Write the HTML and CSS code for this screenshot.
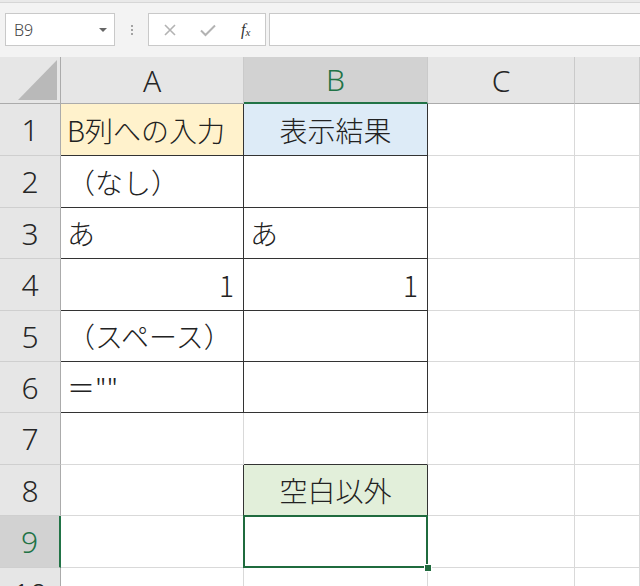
FILE: index.html
```html
<!DOCTYPE html>
<html lang="ja">
<head>
<meta charset="utf-8">
<title>Excel</title>
<link rel="stylesheet" href="styles.css">
</head>
<body>
<div class="app">
  <div class="toolbar">
    <div class="namebox"><span class="ref">B9</span><span class="caret"></span></div>
    <div class="dots"><i></i><i></i><i></i></div>
    <div class="fbtns">
      <svg class="ico" width="14" height="14" viewBox="0 0 14 14"><path d="M2 2 L12 12 M12 2 L2 12" stroke="#b3b3b3" stroke-width="1.6" fill="none"/></svg>
      <svg class="ico" width="18" height="14" viewBox="0 0 18 14"><path d="M2 7.5 L6.5 12 L16 2.5" stroke="#b3b3b3" stroke-width="2" fill="none"/></svg>
      <span class="fx">f<sub>x</sub></span>
    </div>
    <div class="finput"></div>
  </div>
  <div class="sheet">
    <div class="hd corner"><svg width="60" height="46" viewBox="0 0 60 46"><polygon points="57,3 57,43 18,43" fill="#b9b9b9"/></svg></div>
    <div class="hd ch">A</div>
    <div class="hd ch sel">B</div>
    <div class="hd ch">C</div>
    <div class="hd ch"></div>

    <div class="hd rh">1</div>
    <div class="c y dr db l">B列への入力</div>
    <div class="c bl dr db ctr">表示結果</div>
    <div class="c"></div>
    <div class="c"></div>

    <div class="hd rh">2</div>
    <div class="c dr db l">（なし）</div>
    <div class="c dr db"></div>
    <div class="c"></div>
    <div class="c"></div>

    <div class="hd rh">3</div>
    <div class="c dr db l">あ</div>
    <div class="c dr db l">あ</div>
    <div class="c"></div>
    <div class="c"></div>

    <div class="hd rh">4</div>
    <div class="c dr db r">1</div>
    <div class="c dr db r">1</div>
    <div class="c"></div>
    <div class="c"></div>

    <div class="hd rh">5</div>
    <div class="c dr db l">（スペース）</div>
    <div class="c dr db"></div>
    <div class="c"></div>
    <div class="c"></div>

    <div class="hd rh">6</div>
    <div class="c dr db l">＝""</div>
    <div class="c dr db"></div>
    <div class="c"></div>
    <div class="c"></div>

    <div class="hd rh">7</div>
    <div class="c"></div>
    <div class="c db"></div>
    <div class="c"></div>
    <div class="c"></div>

    <div class="hd rh">8</div>
    <div class="c dr"></div>
    <div class="c gr dr db ctr">空白以外</div>
    <div class="c"></div>
    <div class="c"></div>

    <div class="hd rh sel">9</div>
    <div class="c"></div>
    <div class="c selcell"></div>
    <div class="c"></div>
    <div class="c"></div>

    <div class="hd rh">10</div>
    <div class="c"></div>
    <div class="c"></div>
    <div class="c"></div>
    <div class="c"></div>
  </div>
</div>
</body>
</html>
```

FILE: styles.css
```css
html, body {
  margin: 0;
  padding: 0;
}
body {
  width: 640px;
  height: 586px;
  overflow: hidden;
  background: #ffffff;
}
.app {
  width: 640px;
  height: 586px;
  overflow: hidden;
  background: #e9e9e9;
  padding-top: 2px;
  box-sizing: border-box;
}

/* ---------- formula bar ---------- */
.toolbar {
  height: 55px;
  box-sizing: border-box;
  border-top: 1px solid #d6d6d6;
  background: #f3f3f3;
  display: flex;
  align-items: flex-start;
  padding-top: 10px;
}
.namebox {
  margin-left: 5px;
  width: 110px;
  height: 33px;
  box-sizing: border-box;
  background: #fff;
  border: 1px solid #c9c9c9;
  display: flex;
  align-items: center;
  justify-content: space-between;
  padding: 1px 7px 0 8px;
}
.ref {
  font-family: "Noto Sans", "Liberation Sans", sans-serif;
  font-size: 16px;
  font-weight: 300;
  color: #444;
}
.caret {
  width: 0;
  height: 0;
  border-left: 4px solid transparent;
  border-right: 4px solid transparent;
  border-top: 4px solid #666;
}
.dots {
  width: 33px;
  height: 33px;
  display: flex;
  flex-direction: column;
  align-items: center;
  justify-content: center;
  gap: 2px;
}
.dots i {
  display: block;
  width: 2px;
  height: 2px;
  background: #a3a3a3;
}
.fbtns {
  width: 118px;
  height: 33px;
  box-sizing: border-box;
  background: #fff;
  border: 1px solid #c9c9c9;
  display: flex;
  align-items: center;
  padding-left: 14px;
  gap: 22px;
}
.ico {
  display: block;
}
.fx {
  font-family: "Liberation Serif", "DejaVu Serif", serif;
  font-style: italic;
  font-size: 16px;
  color: #333;
  margin-left: 2px;
}
.fx sub {
  font-size: 11px;
  vertical-align: -1px;
}
.finput {
  flex: 1;
  margin-left: 3px;
  height: 33px;
  box-sizing: border-box;
  background: #fff;
  border: 1px solid #c9c9c9;
  border-right: none;
}

/* ---------- grid ---------- */
.sheet {
  display: grid;
  grid-template-columns: 61px 183px 184px 147px 1fr;
  grid-template-rows: 47px 52px 52px 51px 52px 51px 51px 52px 51px 52px 52px;
  background: #fff;
}
.hd {
  background: #e6e6e6;
  box-sizing: border-box;
  font-family: "Noto Sans", "Open Sans", sans-serif;
  font-size: 30px;
  font-weight: 300;
  color: #262626;
  display: flex;
  align-items: center;
  justify-content: center;
}
.corner {
  border-right: 1px solid #ababab;
  border-bottom: 1px solid #ababab;
  align-items: flex-start;
  justify-content: flex-start;
}
.corner svg {
  display: block;
}
.ch {
  border-right: 1px solid #cacaca;
  border-bottom: 1px solid #ababab;
}
.ch.sel {
  background: #d2d2d2;
  color: #217346;
  border-bottom: 2px solid #217346;
}
.rh {
  border-right: 1px solid #ababab;
  border-bottom: 1px solid #cfcfcf;
}
.rh.sel {
  background: #d2d2d2;
  color: #217346;
  border-right: 2px solid #217346;
}
.c {
  box-sizing: border-box;
  border-right: 1px solid #d9d9d9;
  border-bottom: 1px solid #d9d9d9;
  font-family: "Noto Sans CJK JP", "Noto Sans", sans-serif;
  font-size: 28px;
  font-weight: 300;
  color: #222;
  display: flex;
  align-items: center;
  white-space: nowrap;
  padding: 0 6px;
}
.l { justify-content: flex-start; }
.r { justify-content: flex-end; padding-right: 9px; }
.ctr { justify-content: center; }
.dr { border-right-color: #333; }
.db { border-bottom-color: #333; }
.y { background: #fff2cc; }
.bl { background: #ddebf7; }
.gr { background: #e2efda; }

.selcell {
  position: relative;
}
.selcell::after {
  content: "";
  position: absolute;
  left: -1px;
  top: -1px;
  right: -1px;
  bottom: -1px;
  border: 2px solid #1f6b3e;
}
.selcell::before {
  content: "";
  position: absolute;
  right: -5px;
  bottom: -5px;
  width: 6px;
  height: 6px;
  background: #1f6b3e;
  border: 1px solid #fff;
  z-index: 2;
}
```
